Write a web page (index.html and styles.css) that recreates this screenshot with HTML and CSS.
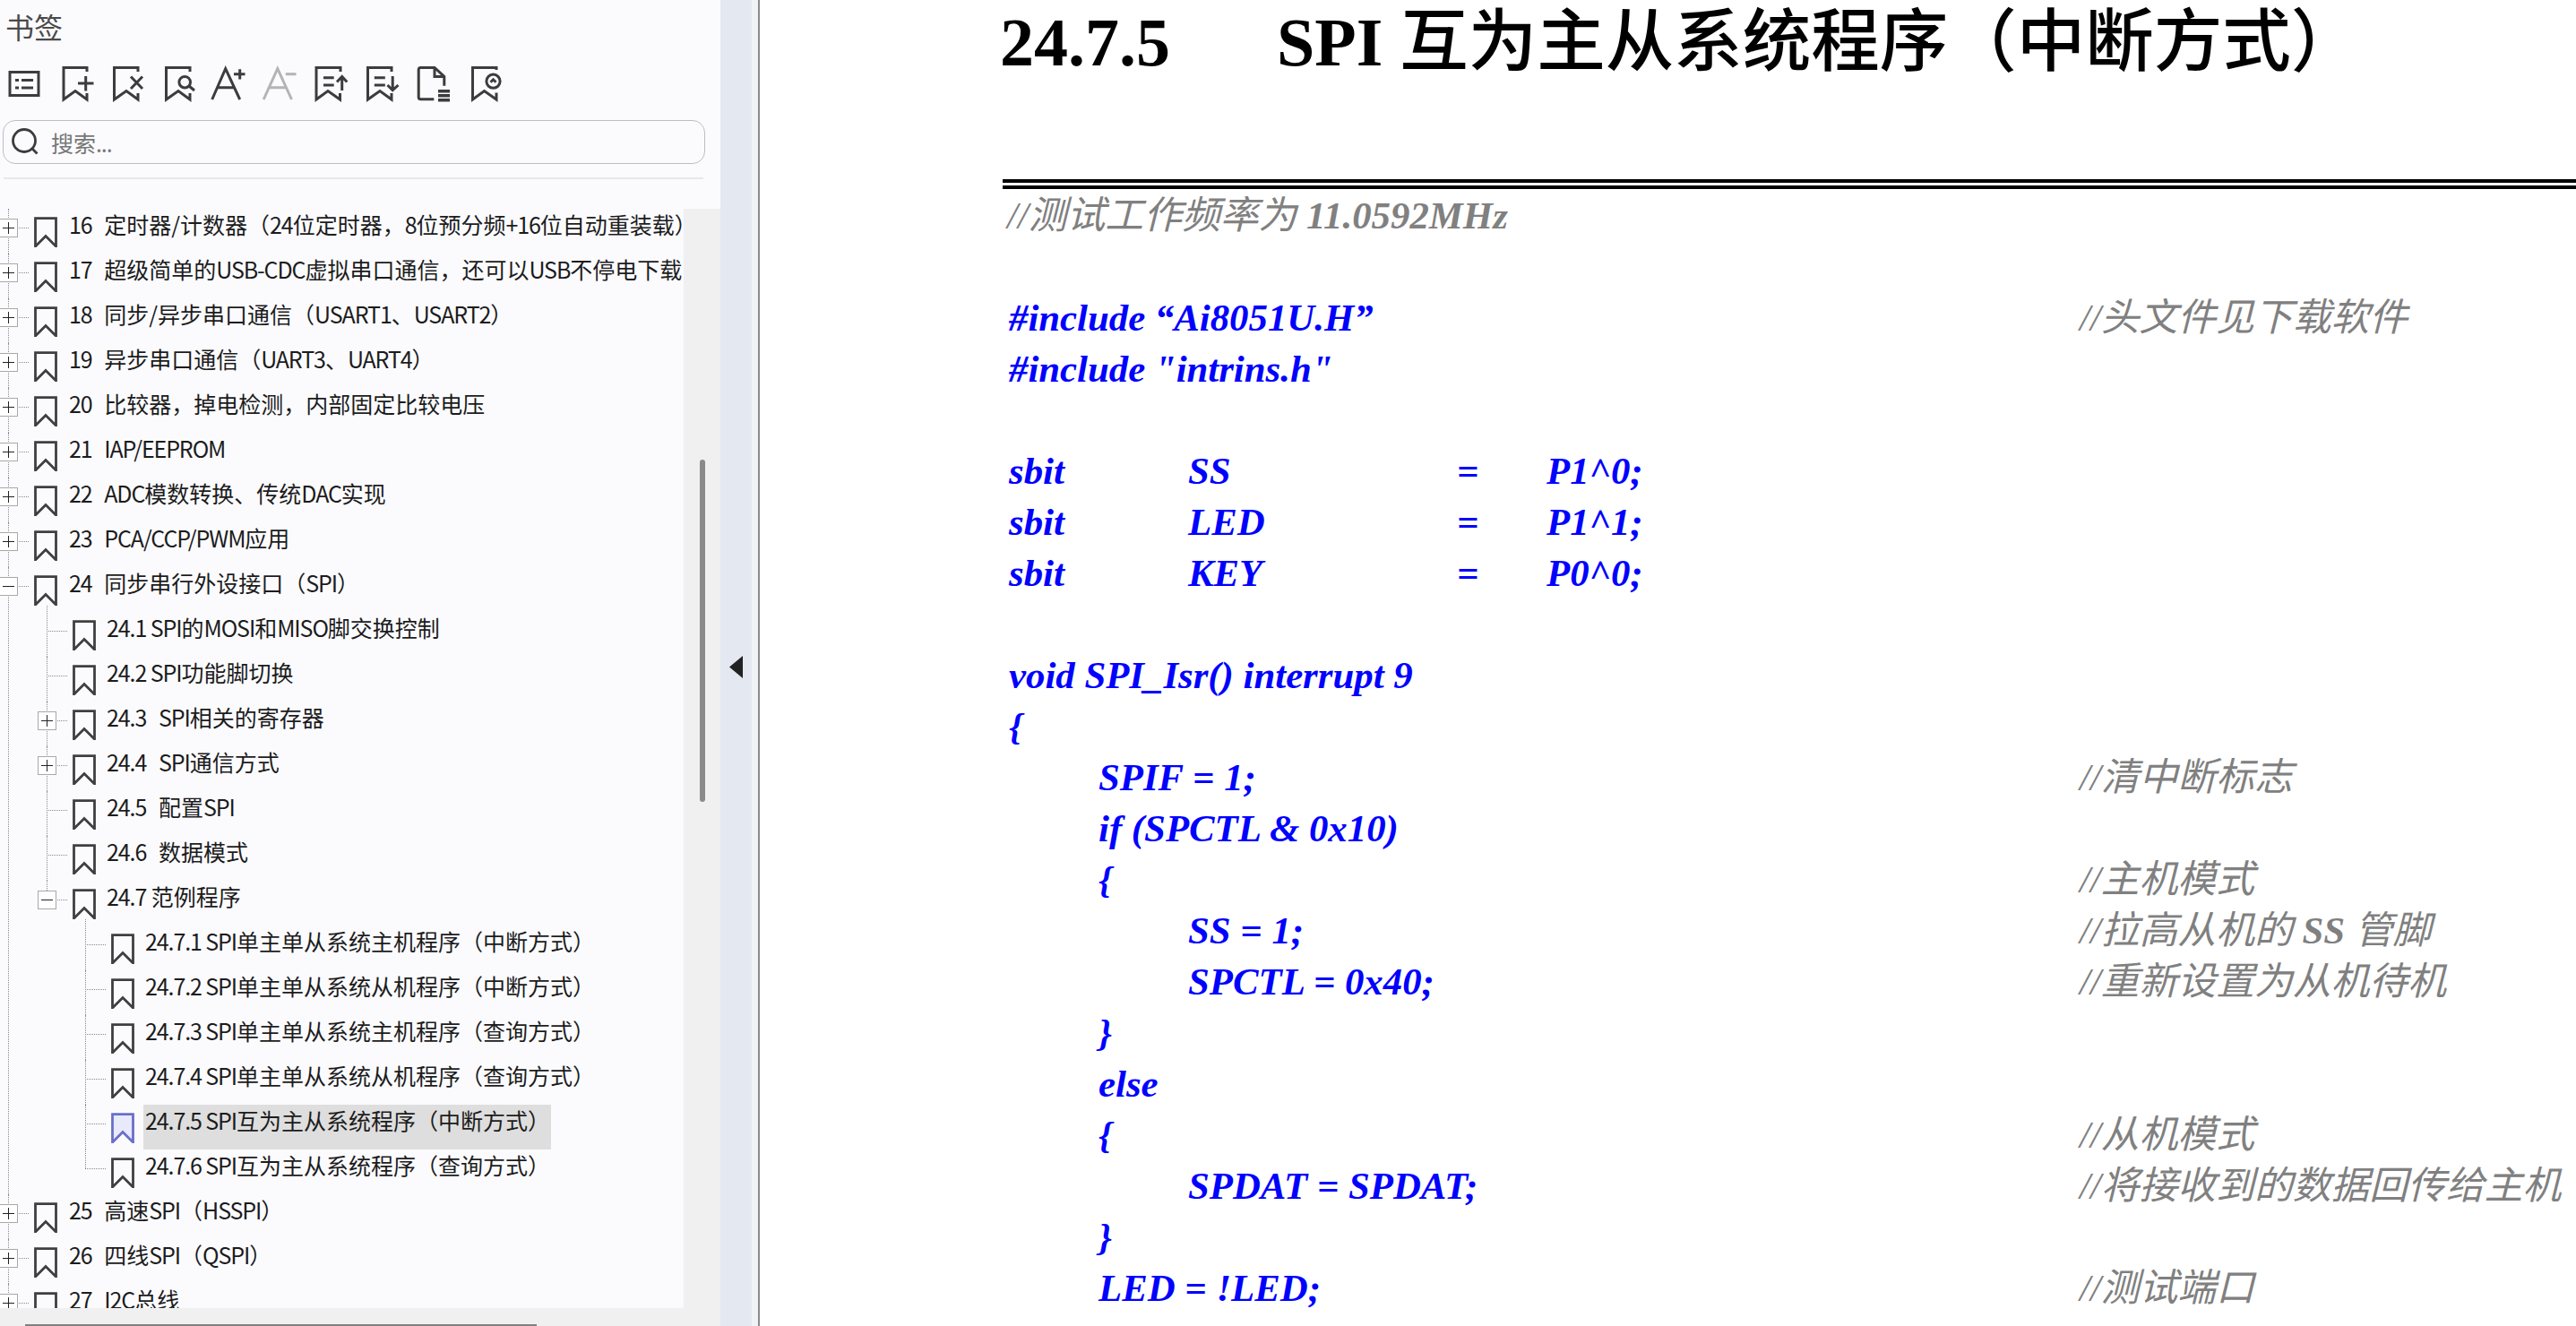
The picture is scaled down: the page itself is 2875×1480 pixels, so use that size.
FILE: index.html
```html
<!DOCTYPE html>
<html lang="zh-CN">
<head>
<meta charset="utf-8">
<title>书签</title>
<link rel="stylesheet" href="styles.css">
</head>
<body>
<svg class="sprite" aria-hidden="true">
  <symbol id="bm" viewBox="0 0 26 34"><path d="M1.5 33V1.7H24.5V33L13 21.5Z"/></symbol>
</svg>
<div class="app">
  <aside class="sidebar">
    <header class="head">
      <h1 class="head-title">书签</h1>
      <div class="tools">
        <svg class="tool" viewBox="0 0 50 42"><rect x="8" y="7.5" width="32" height="26"/><path d="M14 16.5h4M21 16.5H34M14 25h4M21 25H34"/></svg>
        <svg class="tool" viewBox="0 0 50 42"><path d="M36 7V2.5H10V38L23 28.5 36 38V31"/><path d="M26 20H43.5M34.7 12V28.5"/></svg>
        <svg class="tool" viewBox="0 0 50 42"><path d="M36 7V2.5H9.5V38L23 28.5 36 38V31"/><path d="M28 12.5L41 26M41 12.5L28 26"/></svg>
        <svg class="tool" viewBox="0 0 50 42"><path d="M36 7V2.5H9.5V38L23 28.5 36 38V31"/><circle cx="30.2" cy="18.7" r="6.3"/><path d="M35 23L41 28"/></svg>
        <svg class="tool" viewBox="0 0 50 42"><path d="M3.7 38L18.7 3.7 34.7 38M10 24.7H29"/><path d="M28 9.7H40.5M34.7 4.3V15.5"/></svg>
        <svg class="tool off" viewBox="0 0 50 42"><path d="M3.2 38L18.8 3.7 34.5 38M10 24.7H28"/><path d="M27.8 9.7H39.5"/></svg>
        <svg class="tool" viewBox="0 0 50 42"><path d="M32 7V2.5H5V38L18 28.5 31.5 38V31"/><path d="M13 13.7H24.7M13 22H24.7M33.7 12.5V28M28 18.5L33.7 12.5 39.3 18.5"/></svg>
        <svg class="tool" viewBox="0 0 50 42"><path d="M31 7V2.5H4.5V38L18 28.5 31 38V31"/><path d="M11.8 13.7H23.8M11.8 22H23.8M32.2 12V27.7M26.5 22L32.2 27.7 38.5 22"/></svg>
        <svg class="tool" viewBox="0 0 50 42"><path d="M21.3 37.7H6.5Q4.2 37.7 4.2 35.4V4.8Q4.2 2.5 6.5 2.5H22L32.8 12.5V22.7M22 2.5V12.5H32.8"/><path class="thick" d="M26 28.7H39M26 33.7H39M26 38.7H39"/></svg>
        <svg class="tool" viewBox="0 0 50 42"><path d="M33 5V2.5H6.5V38L19.5 28.5 33 38V30.5"/><circle cx="29.5" cy="17.7" r="7.6"/><path d="M26.5 18.8L29.5 15.8 32.5 18.8"/></svg>
      </div>
      <div class="search">
        <svg class="search-icon" viewBox="0 0 34 34"><circle cx="15" cy="15" r="12.5"/><path d="M23.8 23.8L29.5 29.5"/></svg>
        <span class="search-hint">搜索<span class="n">...</span></span>
      </div>
      <div class="divider"></div>
    </header>
    <div class="panes">
      <nav class="tree">
        <ul class="branch">
          <li><div class="row"><span class="box plus"></span><svg class="mark"><use href="#bm"/></svg><span class="label"><span class="n k">16</span>  定时器/计数器（<span class="n">24</span>位定时器，<span class="n">8</span>位预分频<span class="n">+16</span>位自动重装载）</span></div></li>
          <li><div class="row"><span class="box plus"></span><svg class="mark"><use href="#bm"/></svg><span class="label"><span class="n k">17</span>  超级简单的<span class="n">USB-CDC</span>虚拟串口通信，还可以<span class="n">USB</span>不停电下载</span></div></li>
          <li><div class="row"><span class="box plus"></span><svg class="mark"><use href="#bm"/></svg><span class="label"><span class="n k">18</span>  同步/异步串口通信（<span class="n">USART1</span>、<span class="n">USART2</span>）</span></div></li>
          <li><div class="row"><span class="box plus"></span><svg class="mark"><use href="#bm"/></svg><span class="label"><span class="n k">19</span>  异步串口通信（<span class="n">UART3</span>、<span class="n">UART4</span>）</span></div></li>
          <li><div class="row"><span class="box plus"></span><svg class="mark"><use href="#bm"/></svg><span class="label"><span class="n k">20</span>  比较器，掉电检测，内部固定比较电压</span></div></li>
          <li><div class="row"><span class="box plus"></span><svg class="mark"><use href="#bm"/></svg><span class="label"><span class="n k">21</span>  <span class="n">IAP/EEPROM</span></span></div></li>
          <li><div class="row"><span class="box plus"></span><svg class="mark"><use href="#bm"/></svg><span class="label"><span class="n k">22</span>  <span class="n">ADC</span>模数转换、传统<span class="n">DAC</span>实现</span></div></li>
          <li><div class="row"><span class="box plus"></span><svg class="mark"><use href="#bm"/></svg><span class="label"><span class="n k">23</span>  <span class="n">PCA/CCP/PWM</span>应用</span></div></li>
          <li><div class="row"><span class="box minus"></span><svg class="mark"><use href="#bm"/></svg><span class="label"><span class="n k">24</span>  同步串行外设接口（<span class="n">SPI</span>）</span></div>
            <ul class="branch nested">
              <li><div class="row"><svg class="mark"><use href="#bm"/></svg><span class="label"><span class="n">24.1 SPI</span>的<span class="n">MOSI</span>和<span class="n">MISO</span>脚交换控制</span></div></li>
              <li><div class="row"><svg class="mark"><use href="#bm"/></svg><span class="label"><span class="n">24.2 SPI</span>功能脚切换</span></div></li>
              <li><div class="row"><span class="box plus"></span><svg class="mark"><use href="#bm"/></svg><span class="label"><span class="n k">24.3</span>  <span class="n">SPI</span>相关的寄存器</span></div></li>
              <li><div class="row"><span class="box plus"></span><svg class="mark"><use href="#bm"/></svg><span class="label"><span class="n k">24.4</span>  <span class="n">SPI</span>通信方式</span></div></li>
              <li><div class="row"><svg class="mark"><use href="#bm"/></svg><span class="label"><span class="n k">24.5</span>  配置<span class="n">SPI</span></span></div></li>
              <li><div class="row"><svg class="mark"><use href="#bm"/></svg><span class="label"><span class="n k">24.6</span>  数据模式</span></div></li>
              <li><div class="row"><span class="box minus"></span><svg class="mark"><use href="#bm"/></svg><span class="label"><span class="n">24.7</span> 范例程序</span></div>
                <ul class="branch nested">
                  <li><div class="row"><svg class="mark"><use href="#bm"/></svg><span class="label"><span class="n">24.7.1 SPI</span>单主单从系统主机程序（中断方式）</span></div></li>
                  <li><div class="row"><svg class="mark"><use href="#bm"/></svg><span class="label"><span class="n">24.7.2 SPI</span>单主单从系统从机程序（中断方式）</span></div></li>
                  <li><div class="row"><svg class="mark"><use href="#bm"/></svg><span class="label"><span class="n">24.7.3 SPI</span>单主单从系统主机程序（查询方式）</span></div></li>
                  <li><div class="row"><svg class="mark"><use href="#bm"/></svg><span class="label"><span class="n">24.7.4 SPI</span>单主单从系统从机程序（查询方式）</span></div></li>
                  <li><div class="row"><svg class="mark active"><use href="#bm"/></svg><span class="label selected"><span class="n">24.7.5 SPI</span>互为主从系统程序（中断方式）</span></div></li>
                  <li><div class="row"><svg class="mark"><use href="#bm"/></svg><span class="label"><span class="n">24.7.6 SPI</span>互为主从系统程序（查询方式）</span></div></li>
                </ul>
              </li>
            </ul>
          </li>
          <li><div class="row"><span class="box plus"></span><svg class="mark"><use href="#bm"/></svg><span class="label"><span class="n k">25</span>  高速<span class="n">SPI</span>（<span class="n">HSSPI</span>）</span></div></li>
          <li><div class="row"><span class="box plus"></span><svg class="mark"><use href="#bm"/></svg><span class="label"><span class="n k">26</span>  四线<span class="n">SPI</span>（<span class="n">QSPI</span>）</span></div></li>
          <li><div class="row"><span class="box plus"></span><svg class="mark"><use href="#bm"/></svg><span class="label"><span class="n k">27</span>  <span class="n">I2C</span>总线</span></div></li>
        </ul>
      </nav>
      <div class="vtrack"><div class="vthumb"></div></div>
    </div>
    <div class="htrack"><div class="hthumb"></div></div>
  </aside>
  <div class="splitter"><svg class="collapse" viewBox="0 0 15 25"><path d="M15 0V25L0 12.5Z"/></svg></div>
  <main class="viewer">
    <h2 class="doc-title"><span class="doc-num">24.7.5</span>SPI <span class="doc-cjk">互为主从系统程序（中断方式）</span></h2>
    <div class="rule"></div>
    <div class="code">
      <div class="ln"><span class="cm">//测试工作频率为 <b>11.0592MHz</b></span></div>
      <div class="ln"></div>
      <div class="ln"><span class="c">#include “Ai8051U.H”</span><span class="cm">//头文件见下载软件</span></div>
      <div class="ln"><span class="c">#include "intrins.h"</span></div>
      <div class="ln"></div>
      <div class="ln"><span class="c"><i class="t1">sbit</i><i class="t2">SS</i><i class="t3">=</i>P1^0;</span></div>
      <div class="ln"><span class="c"><i class="t1">sbit</i><i class="t2">LED</i><i class="t3">=</i>P1^1;</span></div>
      <div class="ln"><span class="c"><i class="t1">sbit</i><i class="t2">KEY</i><i class="t3">=</i>P0^0;</span></div>
      <div class="ln"></div>
      <div class="ln"><span class="c">void SPI_Isr() interrupt 9</span></div>
      <div class="ln"><span class="c">{</span></div>
      <div class="ln"><span class="c i1">SPIF = 1;</span><span class="cm">//清中断标志</span></div>
      <div class="ln"><span class="c i1">if (SPCTL &amp; 0x10)</span></div>
      <div class="ln"><span class="c i1">{</span><span class="cm">//主机模式</span></div>
      <div class="ln"><span class="c i2">SS = 1;</span><span class="cm">//拉高从机的 <b>SS</b> 管脚</span></div>
      <div class="ln"><span class="c i2">SPCTL = 0x40;</span><span class="cm">//重新设置为从机待机</span></div>
      <div class="ln"><span class="c i1">}</span></div>
      <div class="ln"><span class="c i1">else</span></div>
      <div class="ln"><span class="c i1">{</span><span class="cm">//从机模式</span></div>
      <div class="ln"><span class="c i2">SPDAT = SPDAT;</span><span class="cm">//将接收到的数据回传给主机</span></div>
      <div class="ln"><span class="c i1">}</span></div>
      <div class="ln"><span class="c i1">LED = !LED;</span><span class="cm">//测试端口</span></div>
    </div>
  </main>
</div>
</body>
</html>
```

FILE: styles.css
```css
* { box-sizing: border-box; }
html, body { margin: 0; padding: 0; height: 100%; overflow: hidden; background: #fff; }
.sprite { width: 0; height: 0; position: absolute; }
.app { display: flex; width: 2875px; height: 1480px; font-family: "Noto Sans CJK SC", "Noto Sans", sans-serif; }

/* sidebar */
.sidebar { width: 804px; flex: none; display: flex; flex-direction: column; background: #fbfbfe; }
.head { height: 233px; flex: none; padding: 0 0 0 3px; }
.head-title { margin: 0 0 0 3px; height: 73px; padding-top: 9px; font-size: 32px; line-height: 40px; font-weight: 400; color: #4a4a4a; }
.tools { display: flex; gap: 7.5px; height: 42px; }
.tool { width: 50px; height: 42px; flex: none; fill: none; stroke: #3c3c3c; stroke-width: 3; }
.tool .thick { stroke-width: 3.6; }
.tool.off { stroke: #b4b4b4; }
.search { display: flex; align-items: center; width: 784px; height: 49px; margin-top: 19px; padding-left: 8px; border: 1.5px solid #bcbec4; border-radius: 14px; }
.search-icon { width: 34px; height: 34px; flex: none; fill: none; stroke: #3c3c3c; stroke-width: 2.8; }
.search-hint { margin-left: 11px; font-size: 25px; line-height: 34px; color: #777; }
.divider { width: 781px; height: 2px; margin: 15px 0 0 1px; background: #e8e8ea; }

.panes { display: flex; flex: none; height: 1227px; }
.tree { width: 763px; flex: none; overflow: hidden; background: #fbfbfe; }
.vtrack { flex: 1; padding: 280px 0 0 18px; background: #f0f0f0; }
.vthumb { width: 6px; height: 382px; border-radius: 3px; background: #8a8a8a; }
.htrack { flex: 1; padding: 18px 0 0 28px; background: #f0f0f0; }
.hthumb { width: 571px; height: 2px; background: #808080; }

/* tree */
.branch { list-style: none; margin: 0; padding: 0; }
.branch.nested { margin-left: 43px; }
.branch li { position: relative; }
.branch li::before { content: ""; position: absolute; left: 9px; top: 0; bottom: 0; border-left: 1px dotted #8a8a8a; }
.branch.nested > li:first-child::before { top: -7px; }
.branch.nested > li:last-child::before { bottom: auto; height: 21px; }
.row { position: relative; display: flex; height: 50px; padding-left: 38px; white-space: pre; }
.row::before { content: ""; position: absolute; left: 9px; top: 21px; width: 23px; border-top: 1px dotted #8a8a8a; }
.box { position: absolute; left: -1px; top: 11px; z-index: 1; width: 21px; height: 21px; border: 1px solid #a8a8a8; background: #fff; }
.box::before { content: ""; position: absolute; left: 3px; right: 3px; top: 9px; height: 1px; background: #222; }
.box.plus::after { content: ""; position: absolute; top: 3px; bottom: 3px; left: 9px; width: 1px; background: #222; }
.mark { width: 26px; height: 34px; margin-top: 9px; flex: none; fill: none; stroke: #3f3f3f; stroke-width: 2.8; }
.mark.active { fill: #e8e9fb; stroke: #6a6ecb; }
.label { display: block; height: 50px; margin-left: 13px; font-size: 25px; line-height: 34px; color: #1c1c1c; }
.nested .label { margin-left: 12px; }
.n { letter-spacing: -1.1px; }
.k { padding-right: 2.5px; }
.nested .label.selected { margin-left: 10px; padding: 0 1px 0 2px; background: #dedede; }

/* splitter */
.splitter { width: 44px; flex: none; display: flex; align-items: center; padding: 9px 0 0 10px; background: linear-gradient(to right, #e4e8f1 35px, #f0f2f7 35px); border-right: 2px solid #8c8c8c; }
.collapse { width: 15px; height: 25px; fill: #222; }

/* document */
.viewer { flex: 1; min-width: 0; overflow: hidden; background: #fff; font-family: "Liberation Serif", "Noto Sans CJK SC", serif; }
.doc-title { margin: 0 0 0 268px; height: 100px; font-size: 76px; line-height: 94px; font-weight: 700; white-space: pre; color: #000; }
.doc-num { display: inline-block; width: 309px; }
.doc-cjk { font-size: 76.5px; font-weight: 500; }
.rule { height: 11px; margin: 100px 0 0 271px; border-top: 11px double #000; }
.code { margin-left: 278px; padding-top: 1px; font-size: 42.8px; line-height: 57px; font-weight: 700; font-style: italic; color: #00f; }
.ln { display: grid; grid-template-columns: 1195px 1fr; height: 57px; white-space: pre; }
.c { grid-column: 1; }
.cm { grid-column: 2; color: #808080; font-weight: 400; }
.ln > .cm:first-child { grid-column: 1 / 3; margin-left: -2px; }
.cm b { font-weight: 700; }
.i1 { padding-left: 100px; }
.i2 { padding-left: 200px; }
.t1, .t2, .t3 { display: inline-block; }
.t1 { width: 200px; }
.t2 { width: 300px; }
.t3 { width: 100px; }
```
